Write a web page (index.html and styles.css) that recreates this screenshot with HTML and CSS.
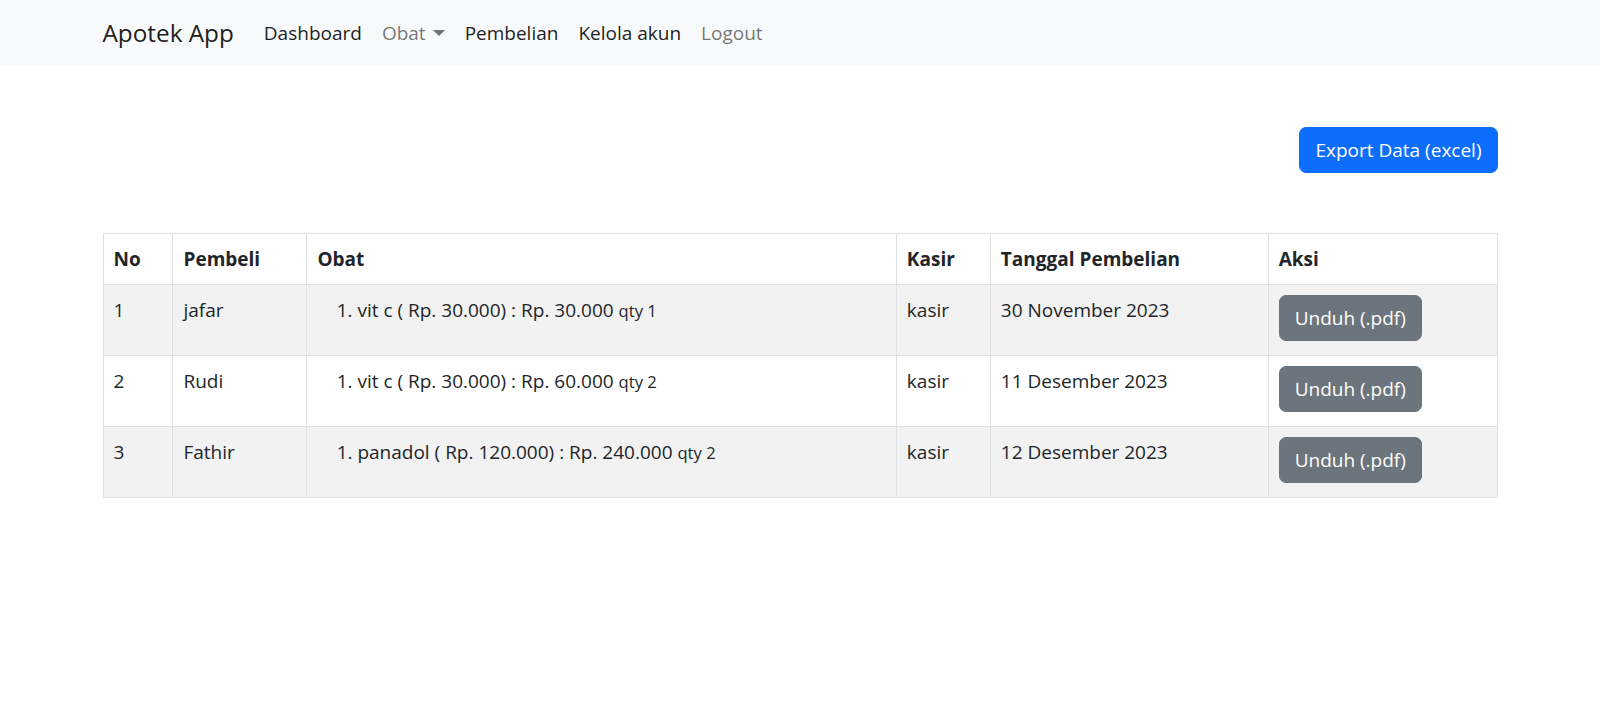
FILE: index.html
```html
<!DOCTYPE html>
<html lang="id">
<head>
<meta charset="utf-8">
<title>Apotek App</title>
<link rel="stylesheet" href="styles.css">
</head>
<body>
<nav class="navbar">
  <div class="nav-inner">
    <a class="brand" href="#">Apotek App</a>
    <ul class="nav-list">
      <li><a class="nav-link active" href="#">Dashboard</a></li>
      <li><a class="nav-link muted dropdown" href="#">Obat<span class="caret"></span></a></li>
      <li><a class="nav-link active" href="#">Pembelian</a></li>
      <li><a class="nav-link active" href="#">Kelola akun</a></li>
      <li><a class="nav-link muted" href="#">Logout</a></li>
    </ul>
  </div>
</nav>
<main class="container">
  <div class="toolbar">
    <a class="btn btn-primary" href="#">Export Data (excel)</a>
  </div>
  <table class="table">
    <thead>
      <tr>
        <th class="col-no">No</th>
        <th class="col-pembeli">Pembeli</th>
        <th class="col-obat">Obat</th>
        <th class="col-kasir">Kasir</th>
        <th class="col-tanggal">Tanggal Pembelian</th>
        <th class="col-aksi">Aksi</th>
      </tr>
    </thead>
    <tbody>
      <tr class="striped">
        <td>1</td>
        <td>jafar</td>
        <td><ol class="items"><li>vit c ( Rp. 30.000) : Rp. 30.000 <small>qty 1</small></li></ol></td>
        <td>kasir</td>
        <td>30 November 2023</td>
        <td><a class="btn btn-secondary" href="#">Unduh (.pdf)</a></td>
      </tr>
      <tr>
        <td>2</td>
        <td>Rudi</td>
        <td><ol class="items"><li>vit c ( Rp. 30.000) : Rp. 60.000 <small>qty 2</small></li></ol></td>
        <td>kasir</td>
        <td>11 Desember 2023</td>
        <td><a class="btn btn-secondary" href="#">Unduh (.pdf)</a></td>
      </tr>
      <tr class="striped">
        <td>3</td>
        <td>Fathir</td>
        <td><ol class="items"><li>panadol ( Rp. 120.000) : Rp. 240.000 <small>qty 2</small></li></ol></td>
        <td>kasir</td>
        <td>12 Desember 2023</td>
        <td><a class="btn btn-secondary" href="#">Unduh (.pdf)</a></td>
      </tr>
    </tbody>
  </table>
</main>
</body>
</html>
```
FILE: styles.css
```css
* { box-sizing: border-box; }

html, body {
  margin: 0;
  padding: 0;
  background: #fff;
}

body {
  font-family: "Open Sans", "Noto Sans", "Liberation Sans", sans-serif;
  font-size: 19px;
  line-height: 30px;
  color: #212529;
}

a { text-decoration: none; }

.navbar {
  background: #f8f9fa;
  height: 66px;
}

.nav-inner {
  max-width: 1395px;
  margin: 0 auto;
  height: 100%;
  display: flex;
  align-items: center;
}

.brand {
  font-size: 24.3px;
  color: rgba(0, 0, 0, 0.9);
  margin-right: 20px;
  line-height: 36px;
}

.nav-list {
  list-style: none;
  margin: 0;
  padding: 0;
  display: flex;
  align-items: center;
}

.nav-link {
  display: block;
  padding: 0 10px;
  line-height: 30px;
}

.nav-link.active { color: rgba(0, 0, 0, 0.9); }
.nav-link.muted { color: rgba(0, 0, 0, 0.55); }

.caret {
  display: inline-block;
  margin-left: 7px;
  vertical-align: 4px;
  width: 0;
  height: 0;
  border-top: 6px solid rgba(0, 0, 0, 0.55);
  border-left: 6px solid transparent;
  border-right: 6px solid transparent;
}

.container {
  max-width: 1395px;
  margin: 0 auto;
  padding-top: 61px;
}

.toolbar {
  display: flex;
  justify-content: flex-end;
}

.btn {
  display: inline-block;
  padding: 7px 15px;
  border: 1px solid transparent;
  border-radius: 7px;
  line-height: 30px;
  font-size: 19px;
  color: #fff;
}

.btn-primary {
  background: #0d6efd;
  border-color: #0d6efd;
}

.btn-secondary {
  background: #6c757d;
  border-color: #6c757d;
}

.table {
  width: 100%;
  margin-top: 60px;
  border-collapse: collapse;
  border: 1px solid #dee2e6;
}

.table th,
.table td {
  border: 1px solid #dee2e6;
  padding: 10px;
  text-align: left;
  vertical-align: top;
}

.table th { font-weight: 700; }

.table tr.striped td { background: #f2f2f2; }

.col-no { width: 70px; }
.col-pembeli { width: 134px; }
.col-obat { width: 590px; }
.col-kasir { width: 94px; }
.col-tanggal { width: 278px; }
.col-aksi { width: 229px; }

.items {
  margin: 0 0 20px;
  padding-left: 40px;
}

.items small {
  font-size: 0.875em;
  line-height: 1;
}
```
